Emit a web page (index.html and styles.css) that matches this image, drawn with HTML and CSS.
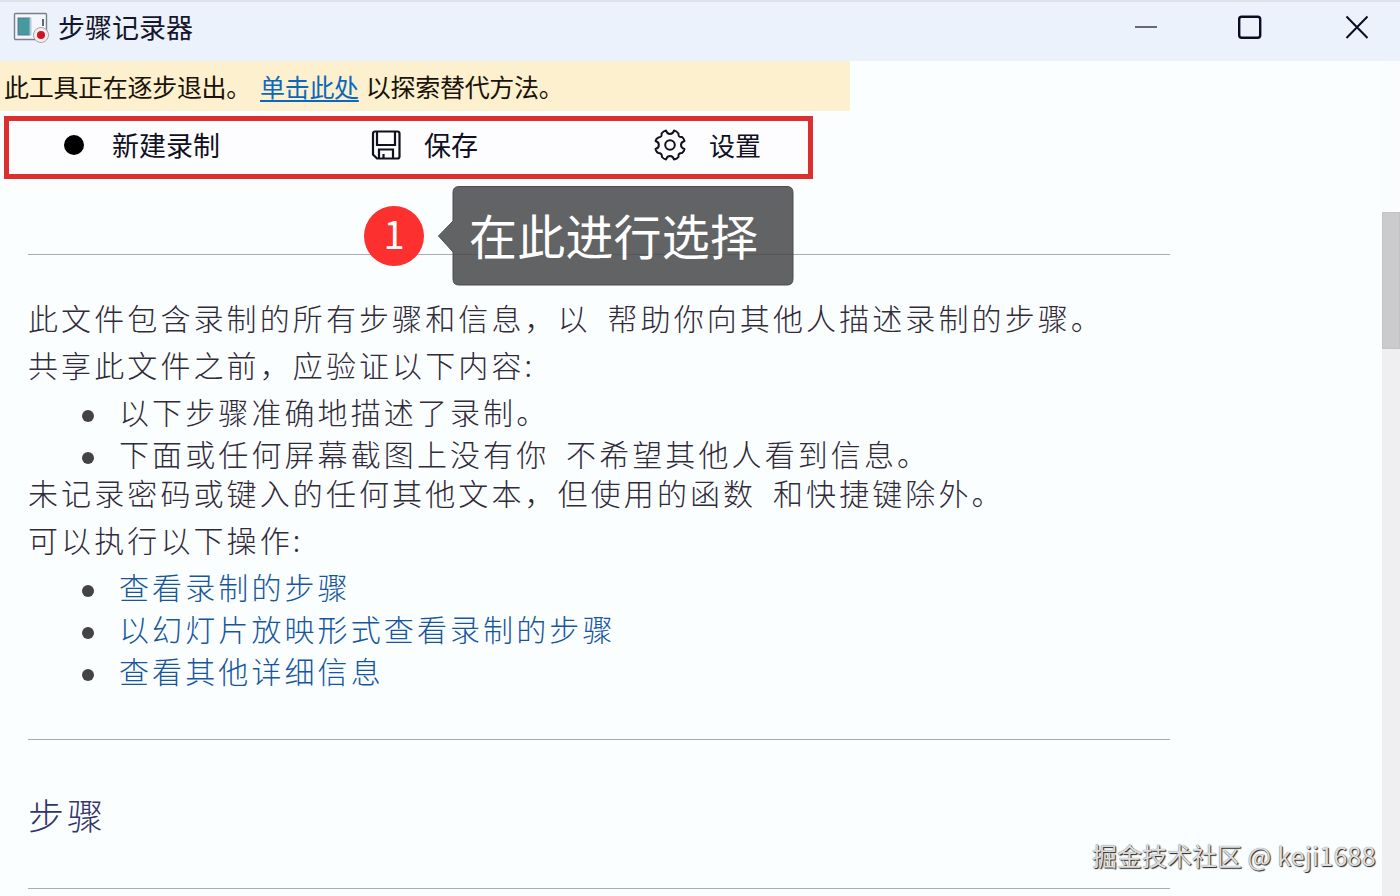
FILE: index.html
```html
<!DOCTYPE html>
<html lang="zh-CN">
<head>
  <meta charset="UTF-8">
  <title>步骤记录器</title>
  <link rel="stylesheet" href="styles.css">
</head>
<body>
  <div class="window">
    <header class="titlebar">
      <svg class="app-icon" width="37" height="32" viewBox="0 0 37 32">
        <rect x="1.5" y="1.5" width="32" height="26" rx="1" fill="#f3f6fa" stroke="#77808c" stroke-width="1.4"/>
        <rect x="5" y="6" width="12" height="17" fill="#459a9b" stroke="#5377a0"/>
        <path d="M17.500 6v17" stroke="#b7c8dc" stroke-width="2"/>
        <path d="M30 7v7" stroke="#3d4654" stroke-width="1.600"/>
        <circle cx="28" cy="23" r="7.500" fill="#f5eff1" stroke="#aaa3aa"/>
        <circle cx="28" cy="23" r="4" fill="#ce1425"/>
      </svg>
      <h1 class="title">步骤记录器</h1>
      <div class="controls">
        <svg width="24" height="26" viewBox="0 0 24 26"><path d="M1 13h22" stroke="#3a3c48" stroke-width="1.500"/></svg>
        <svg width="24" height="26" viewBox="0 0 24 26"><rect x="1.200" y="2.700" width="21" height="21" rx="2.500" fill="none" stroke="#0b0b22" stroke-width="2.400"/></svg>
        <svg width="24" height="26" viewBox="0 0 24 26"><path d="M1.500 2.500l21 21.500M22.500 2.500L1.500 24" stroke="#0b0b22" stroke-width="2"/></svg>
      </div>
    </header>

    <div class="notice">此工具正在逐步退出。<a class="notice-link" href="#">单击此处</a>以探索替代方法。</div>

    <nav class="toolbar">
      <div class="tool tool-new"><span class="dot"></span>新建录制</div>
      <div class="tool tool-save">
        <svg width="30" height="30" viewBox="0 0 30 30" fill="none" stroke="#10101f" stroke-width="2.200">
          <path d="M4 1.500h22.500a2 2 0 0 1 2 2v23a2 2 0 0 1-2 2H6l-4-4V3.500a2 2 0 0 1 2-2z"/>
          <path d="M6 2v13h18V2M8 28v-8.500h14V28M12.500 28v-4"/>
        </svg>
        保存
      </div>
      <div class="tool tool-settings">
        <svg width="32" height="32" viewBox="0 0 32 32" fill="none" stroke="#10101f" stroke-width="2" stroke-linejoin="round">
          <path d="M12 1.500Q9.500 2 7.500 4.500Q8.500 8 4.500 8.500Q2 9.500 1.500 12Q5 13 4.800 16Q5 19 1.500 20Q2.500 23.500 4.500 24Q8 24 8 28Q9.500 30 12 30.500Q13 27 16 27Q19 27 20 30.500Q23 30 24.500 28Q23.800 24 28 24Q30 22.500 30.500 20Q27 19 27 16Q27 13 30.500 12Q30 9.500 28 8Q23.800 8.500 24.500 4.500Q22.500 2 20 1.500Q19 5 16 5Q13 5 12 1.500z"/>
          <circle cx="16" cy="16" r="4.800"/>
        </svg>
        设置
      </div>
    </nav>

    <div class="marker">
      <span class="badge">1</span>
      <div class="callout">
        <svg class="callout-shape" width="357" height="100" viewBox="0 0 357 100">
          <path d="M21 .5h328q6 0 6 6v86.500q0 6-6 6H21q-6 0-6-6V66L.500 50 15 35V6.500q0-6 6-6z" fill="#464849" fill-opacity=".85" stroke="#4b4d50"/>
        </svg>
        <span class="callout-text">在此进行选择</span>
      </div>
    </div>

    <main class="content">
      <hr>
      <section class="intro">
        <p>此文件包含录制的所有步骤和信息，以 帮助你向其他人描述录制的步骤。</p>
        <p>共享此文件之前，应验证以下内容:</p>
        <ul>
          <li>以下步骤准确地描述了录制。</li>
          <li>下面或任何屏幕截图上没有你 不希望其他人看到信息。</li>
        </ul>
        <p>未记录密码或键入的任何其他文本，但使用的函数 和快捷键除外。</p>
        <p>可以执行以下操作:</p>
        <ul class="links">
          <li><a href="#">查看录制的步骤</a></li>
          <li><a href="#">以幻灯片放映形式查看录制的步骤</a></li>
          <li><a href="#">查看其他详细信息</a></li>
        </ul>
      </section>
      <hr>
      <h2>步骤</h2>
      <hr>
    </main>

    <div class="scrollbar"><div class="thumb"></div></div>
    <div class="watermark">掘金技术社区 <span class="at">@</span> <span class="user">keji1688</span></div>
  </div>
</body>
</html>
```
FILE: styles.css
```css
* { box-sizing: border-box; }
body { margin: 0; font-family: "Noto Sans CJK SC", sans-serif; color: #302a39; }
.window { position: relative; width: 1400px; height: 896px; overflow: hidden; background: #fbfeff; }

.titlebar { display: flex; align-items: center; height: 61px; padding: 0 31px 9px 13px; background: #ecf2fb; border-top: 2px solid #dde3e9; }
.app-icon { margin-top: 2px; }
.title { margin: 0 0 0 8px; font-size: 27px; font-weight: 400; line-height: 40px; color: #15152b; }
.controls { display: flex; gap: 80px; margin-left: auto; }
.controls svg { display: block; }
.controls svg:nth-child(-n+2) { margin-left: -3px; margin-right: 3px; }

.notice { width: 850px; height: 50px; padding: 2px 0 0 4px; background: #fdf0cf; color: #191308; font-size: 25px; line-height: 46px; letter-spacing: -0.3px; white-space: nowrap; }
.notice-link { margin: 0 7px 0 9px; color: #0b68bd; text-underline-offset: 3px; text-decoration-thickness: 1.5px; }

.toolbar { display: flex; align-items: center; width: 809px; height: 63px; margin: 5px 0 0 4px; padding-bottom: 6px; background: #fdfdff; border: 5px solid #dc3030; }
.tool { display: flex; align-items: center; color: #10101f; font-size: 27px; line-height: 36px; }
.tool-new { width: 307px; padding-left: 55px; gap: 28px; }
.tool-save { width: 284px; padding-left: 55px; gap: 23px; }
.tool-settings { padding-left: 54px; gap: 23px; font-size: 26px; }
.dot { width: 20px; height: 20px; border-radius: 50%; background: #000; }

.marker { position: absolute; left: 364px; top: 186px; display: flex; align-items: center; gap: 14px; }
.badge { width: 60px; height: 60px; border-radius: 50%; background: #fb302f; color: #fff; font-size: 38px; line-height: 54px; text-align: center; }
.callout { position: relative; width: 357px; height: 100px; padding: 12px 0 0 31px; }
.callout-shape { position: absolute; left: 0; top: 0; }
.callout-text { position: relative; color: #fff; font-size: 48px; line-height: 72px; letter-spacing: 0.2px; }

.content { width: 1142px; margin: 75px 0 0 28px; }
hr { height: 1px; margin: 0 0 1px; border: 0; background: #a9abb2; }
.intro { height: 483px; padding-top: 43px; font-size: 30px; font-weight: 300; letter-spacing: 3.1px; word-spacing: 7px; white-space: nowrap; }
.intro p { margin: 0 0 11px; line-height: 36px; }
.intro ul { margin: -3px 0 0; padding: 0; list-style: none; }
.intro li { display: flex; align-items: center; height: 42px; line-height: 36px; }
.intro ul + p { margin-top: 0; }
.intro li::before { content: ""; width: 12px; height: 12px; margin: 10px 25px 0 54px; border-radius: 50%; background: #434345; }
.intro a { color: #17569c; text-decoration: none; }
h2 { height: 147px; margin: 0; padding-top: 46px; color: #33346c; font-size: 36px; font-weight: 300; line-height: 54px; letter-spacing: 3px; }

.scrollbar { position: absolute; right: 0; top: 61px; width: 18px; height: 835px; padding-top: 151px; background: linear-gradient(#fbfcfe 151px, #efeff2 151px); }
.thumb { height: 137px; background: #cbcbce; border: 1px solid #c3c3c6; }
.watermark { position: absolute; left: 1092px; top: 837px; color: #dedede; font-size: 25px; line-height: 37px; white-space: nowrap; text-shadow: 1px 1px 1px #222, 0 0 1px #666; }
.at, .user { letter-spacing: 0.3px; }
```
